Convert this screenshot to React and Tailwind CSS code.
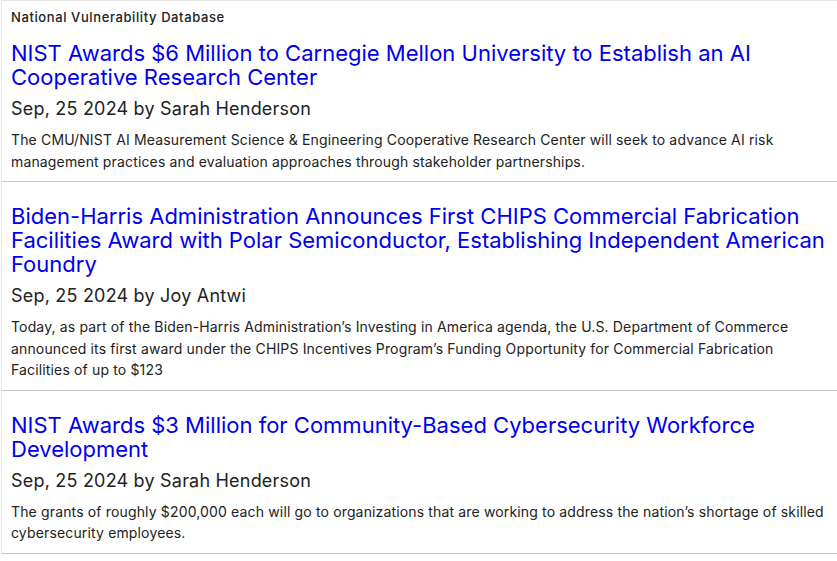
import clsx from 'clsx'

const posts = [
    {
        title: 'NIST Awards $6 Million to Carnegie Mellon University to Establish an AI Cooperative Research Center',
        author: 'Sarah Henderson',
        date: 'Sep, 25 2024',
        desc: 'The CMU/NIST AI Measurement Science & Engineering Cooperative Research Center will seek to advance AI risk management practices and evaluation approaches through stakeholder partnerships.',
    },
    {
        title: 'Biden-Harris Administration Announces First CHIPS Commercial Fabrication Facilities Award with Polar Semiconductor, Establishing Independent American Foundry',
        author: 'Joy Antwi',
        date: 'Sep, 25 2024',
        desc: 'Today, as part of the Biden-Harris Administration\u2019s Investing in America agenda, the U.S. Department of Commerce announced its first award under the CHIPS Incentives Program\u2019s Funding Opportunity for Commercial Fabrication Facilities of up to $123',
    },
    {
        title: 'NIST Awards $3 Million for Community-Based Cybersecurity Workforce Development',
        author: 'Sarah Henderson',
        date: 'Sep, 25 2024',
        desc: 'The grants of roughly $200,000 each will go to organizations that are working to address the nation\u2019s shortage of skilled cybersecurity employees.',
    },
]

export default function App() {
    return (
        <div className="min-h-screen bg-white font-['Inter','Liberation_Sans',sans-serif]">
            <div className="ml-px border-l border-t border-[#e6e6e6]">
                {/* Source */}
                <div className="px-[9px] pt-[6px] text-[13px] leading-[20px] font-medium tracking-[0.6px] text-[#222]">
                    National Vulnerability Database
                </div>
                {posts.map((post, i) => (
                    <div
                        key={i}
                        className={clsx(
                            'border-b border-[#c8c8c8] px-[9px] pb-[9px]',
                            i === 0 ? 'pt-[14px]' : 'pt-[22px]'
                        )}
                    >
                        <a href="#" className="block text-[22px] leading-[24px] text-[#0000ee]">
                            {post.title}
                        </a>
                        <p className="mt-[8px] text-[18px] leading-[24px] tracking-[0.2px] text-[#222]">
                            {post.date} by {post.author}
                        </p>
                        <p className="mt-[8px] text-[14px] leading-[21.5px] tracking-[0.15px] text-[#222]">
                            {post.desc}
                        </p>
                    </div>
                ))}
            </div>
        </div>
    )
}
